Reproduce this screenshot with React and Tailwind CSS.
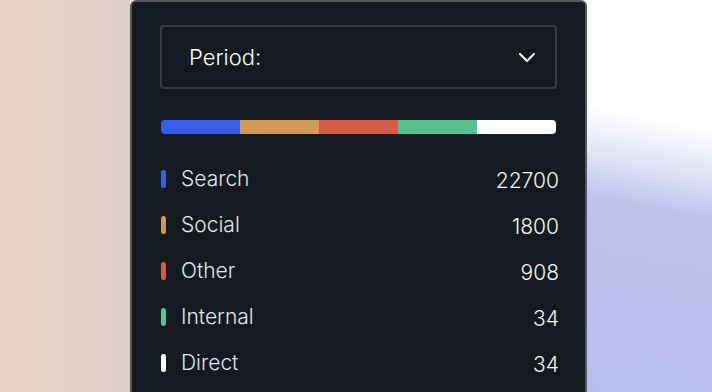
import { useState } from 'react';

const sources = [
    { name: 'Search', value: 22700, color: 'bg-[#3a5be8]' },
    { name: 'Social', value: 1800, color: 'bg-[#d09b56]' },
    { name: 'Other', value: 908, color: 'bg-[#d45a4a]' },
    { name: 'Internal', value: 34, color: 'bg-[#57c28f]' },
    { name: 'Direct', value: 34, color: 'bg-white' },
];

export default function App() {
    const [open, setOpen] = useState(false);

    return (
        <div className="flex h-[392px] w-[712px] overflow-hidden font-['Inter','Liberation_Sans',sans-serif]">
            {/* left backdrop */}
            <div className="w-[130px] shrink-0 bg-gradient-to-r from-[#e7d6c4] to-[#ddd0ca]" />

            {/* card */}
            <div className="h-[410px] w-[457px] shrink-0 rounded-t-md border-2 border-[#55585d] bg-[#151920] px-[28px] pt-[23px]">
                <button
                    onClick={() => setOpen(!open)}
                    className="flex h-[64px] w-full items-center justify-between rounded-[4px] border-2 border-[#383c42] pl-[27px] pr-[20px] text-[22px] font-light text-white"
                >
                    <span>Period:</span>
                    <svg width="16" height="9" viewBox="0 0 16 9" fill="none">
                        <path d="M1 1l7 7 7-7" stroke="white" strokeWidth="2" strokeLinecap="round" strokeLinejoin="round" />
                    </svg>
                </button>

                <div className="mx-px mt-[31px] flex h-[14px] overflow-hidden rounded-[4px]">
                    {sources.map((s) => (
                        <div key={s.name} className={'flex-1 ' + s.color} />
                    ))}
                </div>

                <div className="ml-px -mr-[2px] mt-[22px]">
                    {sources.map((s) => (
                        <div key={s.name} className="flex h-[46px] items-center">
                            <div className={'h-[18px] w-[5px] rounded-full ' + s.color} />
                            <span className="ml-[15px] text-[21px] font-light text-[#e2e4e7]">{s.name}</span>
                            <span className="ml-auto mt-[4px] text-[21px] font-light text-[#f4f5f6]">{s.value}</span>
                        </div>
                    ))}
                </div>
            </div>

            {/* right backdrop */}
            <div className="flex-1 bg-[linear-gradient(191deg,#ffffff_31%,#dcdff4_44%,#bec2ec_53%,#b9bfec_100%)]" />
        </div>
    );
}
